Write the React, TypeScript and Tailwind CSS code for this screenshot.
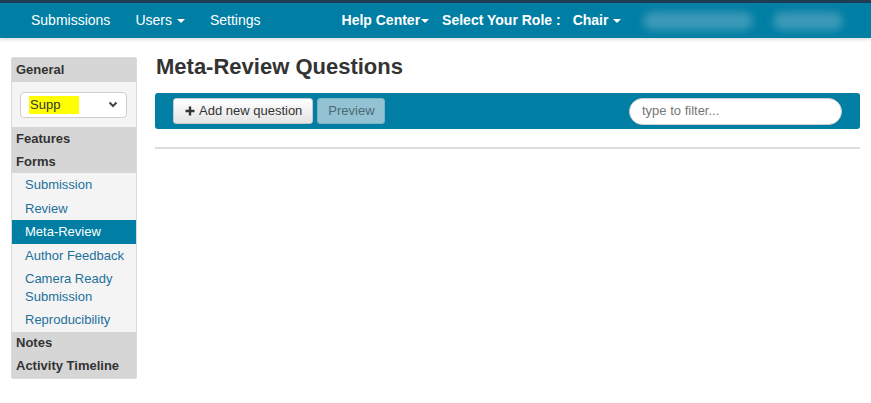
import React from "react";

const Caret = () => (
  <span className="inline-block ml-[5px] align-middle border-t-[4px] border-t-current border-x-[4px] border-x-transparent w-0 h-0" />
);

export default function App() {
  const linkItems = [
    { label: "Submission" },
    { label: "Review" },
    { label: "Meta-Review", active: true },
    { label: "Author Feedback" },
    { label: "Camera Ready Submission", two: true },
    { label: "Reproducibility" },
  ];
  return (
    <div className="w-[871px] h-[403px] bg-white overflow-hidden text-[#333]" style={{ fontFamily: '"Liberation Sans", Arial, sans-serif' }}>
      <div className="h-[3px] bg-[#1e3d55]" />
      <div className="h-[35px] bg-[#007ea4] flex items-center text-white text-[14px] shadow-[0_2px_3px_rgba(0,0,0,0.12)] relative">
        <div className="ml-[31px]">Submissions</div>
        <div className="ml-[25px] flex items-center">Users<Caret /></div>
        <div className="ml-[25px]">Settings</div>
        <div className="ml-[81px] font-bold flex items-center">Help Center<span className="inline-block ml-[1px] border-t-[4px] border-t-current border-x-[4px] border-x-transparent w-0 h-0" /></div>
        <div className="ml-[13px] font-bold">Select Your Role :</div>
        <div className="ml-[12px] font-bold flex items-center">Chair<Caret /></div>
        <div className="ml-[22px] w-[110px] h-[18px] rounded-full bg-[#3d9ab8] blur-[4px]" />
        <div className="ml-[20px] w-[70px] h-[18px] rounded-full bg-[#3d9ab8] blur-[4px]" />
      </div>
      <div className="flex pt-[19px]">
        <div className="ml-[11px] w-[126px] self-start border border-[#dcdcdc] rounded-[2px] bg-[#f4f4f4] text-[13px]">
          <div className="h-[24px] bg-[#d6d6d6] font-bold px-[4px] flex items-center">General</div>
          <div className="h-[45px] flex items-center px-[8px]">
            <div className="w-[107px] h-[26px] bg-white border border-[#cfcfcf] rounded-[4px] flex items-center justify-between pl-[8px] pr-[8px]">
              <span className="bg-[#ffff00] w-[50px] h-[18px] leading-[18px] pl-[1px]">Supp</span>
              <svg width="10" height="7" viewBox="0 0 10 7"><path d="M1.5 1.5 L5 5 L8.5 1.5" stroke="#444" strokeWidth="2" fill="none" /></svg>
            </div>
          </div>
          <div className="h-[23px] bg-[#d6d6d6] font-bold px-[4px] flex items-center">Features</div>
          <div className="h-[23px] bg-[#d6d6d6] font-bold px-[4px] flex items-center">Forms</div>
          {linkItems.map((it) => (
            <div
              key={it.label}
              className={
                (it.two ? "py-[2.5px] leading-[18px] " : "h-[23.5px] flex items-center ") +
                "pl-[13px] pr-[4px] " +
                (it.active ? "bg-[#007ea4] text-white" : "text-[#23709b]")
              }
            >
              {it.two ? (
                <>
                  Camera Ready
                  <br />
                  Submission
                </>
              ) : (
                it.label
              )}
            </div>
          ))}
          <div className="h-[23px] bg-[#d6d6d6] font-bold px-[4px] flex items-center">Notes</div>
          <div className="h-[23px] bg-[#d6d6d6] font-bold px-[4px] flex items-center">Activity Timeline</div>
        </div>
        <div className="ml-[18px] w-[705px]">
          <h1 className="text-[22px] font-bold leading-[26px] mt-[-3px] ml-[1px] text-[#333]">Meta-Review Questions</h1>
          <div className="mt-[13px] h-[36px] bg-[#007ea4] rounded-[3px] flex items-center pl-[18px] pr-[18px]">
            <button className="h-[26px] pl-[11px] pr-[10px] bg-gradient-to-b from-white to-[#e4e4e4] border border-[#c8c8c8] rounded-[3px] text-[13px] text-[#333] flex items-center">
              <svg width="10" height="10" viewBox="0 0 10 10" className="mr-[4px]"><path d="M5 0.5 V9.5 M0.5 5 H9.5" stroke="#333" strokeWidth="2.4" /></svg>
              Add new question
            </button>
            <button className="ml-[4px] h-[26px] pl-[10px] pr-[9px] bg-[#93c3d2] border border-[#7fb3c4] rounded-[3px] text-[13px] text-[#4c6a75]">Preview</button>
            <div className="ml-auto w-[213px] h-[27px] bg-white rounded-full border border-[#cfcfcf] flex items-center pl-[12px] text-[13px] text-[#777]">type to filter...</div>
          </div>
          <div className="mt-[18px] h-[2px] bg-[#dddddd]" />
        </div>
      </div>
    </div>
  );
}
